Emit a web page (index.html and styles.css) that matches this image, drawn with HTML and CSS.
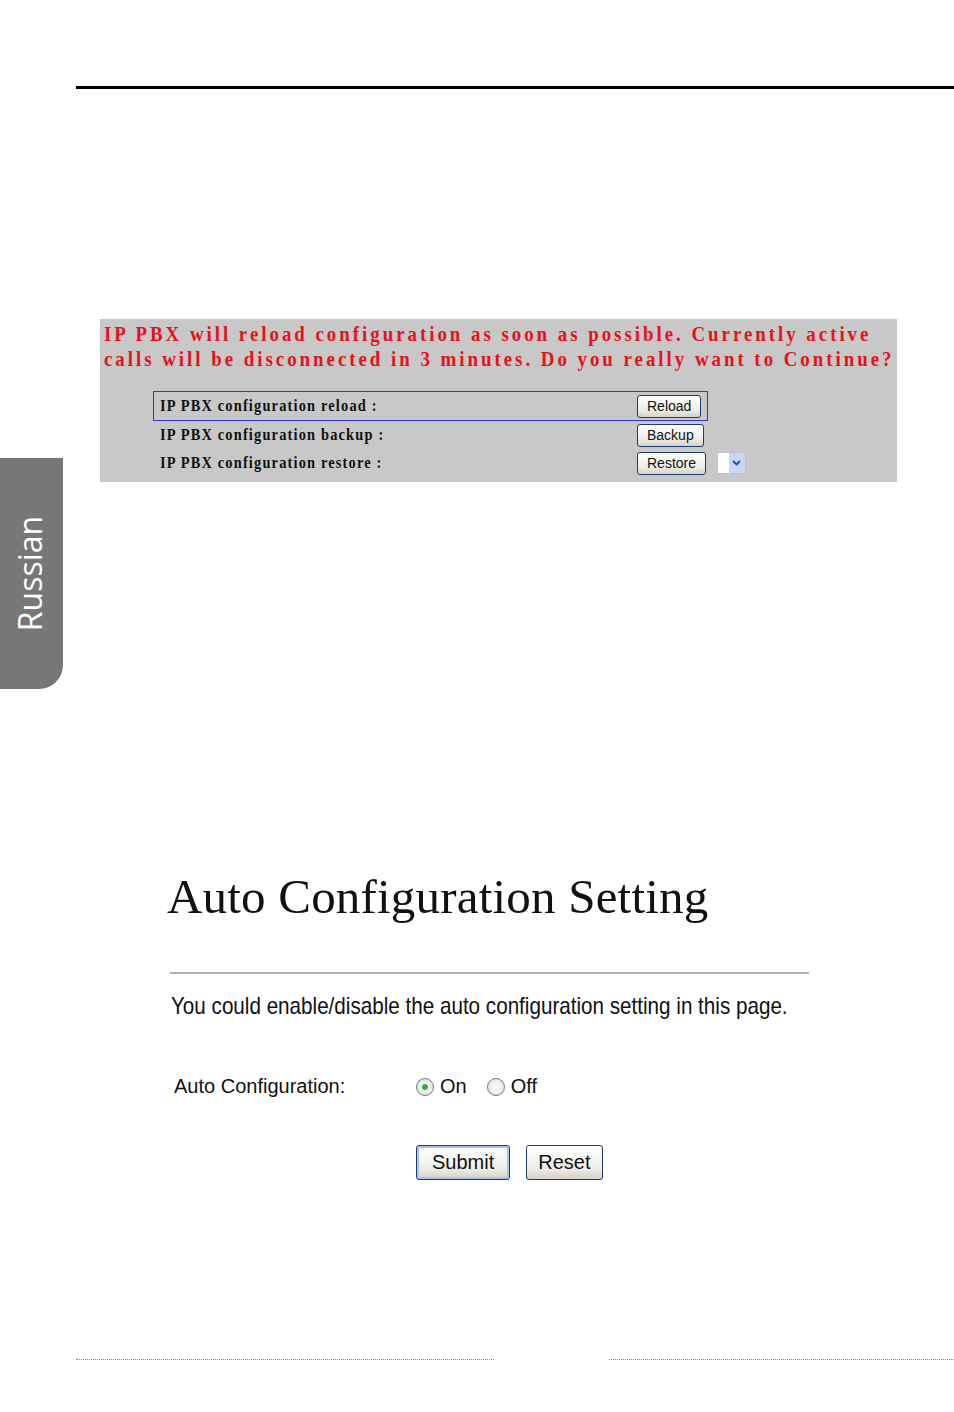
FILE: index.html
```html
<!DOCTYPE html>
<html lang="en">

<head>
    <title>Auto Configuration</title>
    <meta charset="utf-8">
    <link rel="stylesheet" href="styles.css">
</head>

<body>
    <div class="page">
        <div class="top-rule"></div>

        <!-- reload / backup / restore panel -->
        <div class="pbx-panel">
            <p class="pbx-warning">
                <span>IP PBX will reload configuration as soon as possible. Currently active</span><br>
                <span>calls will be disconnected in 3 minutes. Do you really want to Continue?</span>
            </p>
            <table class="pbx-table">
                <tr class="row-active">
                    <td class="pbx-label"><span>IP PBX configuration reload :</span></td>
                    <td class="pbx-action"><button class="pbx-btn">Reload</button></td>
                    <td></td>
                </tr>
                <tr>
                    <td class="pbx-label"><span>IP PBX configuration backup :</span></td>
                    <td class="pbx-action"><button class="pbx-btn">Backup</button></td>
                    <td></td>
                </tr>
                <tr>
                    <td class="pbx-label"><span>IP PBX configuration restore :</span></td>
                    <td class="pbx-action"><button class="pbx-btn">Restore</button></td>
                    <td class="pbx-extra">
                        <span class="mini-select">
                            <span class="mini-arrow">
                                <svg width="9" height="6" viewBox="0 0 9 6"><path d="M1 1 L4.5 4.5 L8 1" fill="none" stroke="#2b4b9b" stroke-width="1.8"/></svg>
                            </span>
                        </span>
                    </td>
                </tr>
            </table>
        </div>

        <div class="side-tab"><span>Russian</span></div>

        <!-- auto configuration form -->
        <div class="auto-config">
            <h1 class="ac-title">Auto Configuration Setting</h1>
            <div class="ac-rule"></div>
            <p class="ac-desc"><span>You could enable/disable the auto configuration setting in this page.</span></p>
            <div class="ac-row">
                <span class="ac-label">Auto Configuration:</span>
                <label class="radio"><span class="radio-dot checked"></span>On</label>
                <label class="radio"><span class="radio-dot"></span>Off</label>
            </div>
            <div class="ac-buttons">
                <button class="xp-btn default">Submit</button>
                <button class="xp-btn reset">Reset</button>
            </div>
        </div>

        <div class="footer">
            <div class="dots dots-left"></div>
            <div class="dots dots-right"></div>
        </div>
    </div>
</body>

</html>
```

FILE: styles.css
```css
body {
    margin: 0;
    padding: 0;
    background: #FFFFFF;
}

.page {
    position: relative;
    width: 954px;
    height: 1412px;
    overflow: hidden;
}

.top-rule {
    margin: 86px 0 0 76px;
    height: 3px;
    background: #000000;
}

.pbx-panel {
    margin: 230px 0 0 100px;
    width: 797px;
    height: 163px;
    box-sizing: border-box;
    background: #C8C8C8;
    padding: 3px 0 0 4px;
}

.pbx-warning {
    margin: 0;
    font-family: 'Liberation Serif', serif;
    font-weight: 700;
    font-size: 21px;
    line-height: 25px;
    letter-spacing: 3.3px;
    color: #E8101A;
    white-space: nowrap;
}

.pbx-warning span {
    display: inline-block;
    transform: scaleX(0.9);
    transform-origin: left center;
}

.pbx-table {
    margin: 19px 0 0 49px;
    border-collapse: collapse;
}

.pbx-table td {
    height: 28px;
    padding: 0;
}

.row-active td {
    border-top: 1px solid #3535D8;
    border-bottom: 1px solid #3535D8;
}

.row-active td:first-child {
    border-left: 1px solid #3535D8;
}

.row-active td:nth-child(2) {
    border-right: 1px solid #3535D8;
}

.row-active td:last-child {
    border: none;
}

.pbx-label {
    width: 477px;
    padding-left: 6px !important;
    font-family: 'Liberation Serif', serif;
    font-weight: 700;
    font-size: 16px;
    letter-spacing: 1.3px;
    color: #111111;
    white-space: nowrap;
}

.pbx-label span {
    display: inline-block;
    transform: scaleX(0.9);
    transform-origin: left center;
}

.pbx-action {
    width: 70px;
}

.pbx-btn {
    display: block;
    height: 23px;
    padding: 0 9px;
    font-family: 'Liberation Sans', sans-serif;
    font-size: 14px;
    color: #111111;
    background: linear-gradient(#FFFFFF, #ECECE6 70%, #D6D0C5);
    border: 1px solid #1C3C6E;
    border-radius: 3px;
}

.pbx-extra {
    padding-left: 9px !important;
}

.mini-select {
    display: flex;
    justify-content: flex-end;
    width: 29px;
    height: 22px;
    background: #FFFFFF;
    border: 1px solid #C4C4C4;
    box-sizing: border-box;
}

.mini-arrow {
    display: flex;
    align-items: center;
    justify-content: center;
    width: 16px;
    background: #C9D6F6;
}

.side-tab {
    position: absolute;
    left: 0;
    top: 458px;
    width: 63px;
    height: 231px;
    background: #777777;
    border-bottom-right-radius: 24px;
    display: flex;
    align-items: center;
    justify-content: center;
}

.side-tab span {
    transform: rotate(-90deg);
    font-family: 'Open Sans', sans-serif;
    font-size: 32px;
    color: #FFFFFF;
    margin-left: -4px;
}

.auto-config {
    margin: 0 0 0 167px;
    padding-top: 385px;
    width: 642px;
}

.ac-title {
    margin: 0;
    font-family: 'Liberation Serif', serif;
    font-weight: 400;
    font-size: 49px;
    line-height: 60px;
    letter-spacing: 0.2px;
    color: #111111;
}

.ac-rule {
    margin: 45px 0 0 3px;
    height: 2px;
    background: #B5B2A8;
}

.ac-desc {
    margin: 17px 0 0 4px;
    font-family: 'Liberation Sans', sans-serif;
    font-size: 24px;
    line-height: 30px;
    color: #111111;
    white-space: nowrap;
}

.ac-desc span {
    display: inline-block;
    transform: scaleX(0.86);
    transform-origin: left center;
}

.ac-row {
    display: flex;
    align-items: center;
    margin: 54px 0 0 7px;
    font-family: 'Liberation Sans', sans-serif;
    font-size: 20px;
    color: #111111;
}

.ac-label {
    width: 242px;
}

.radio {
    display: flex;
    align-items: center;
    gap: 6px;
    margin-right: 20px;
}

.radio-dot {
    width: 16px;
    height: 16px;
    border: 1px solid #6A7A8A;
    border-radius: 50%;
    background: radial-gradient(#FFFFFF, #DDDDDD);
    display: flex;
    align-items: center;
    justify-content: center;
}

.radio-dot.checked::after {
    content: "";
    width: 6px;
    height: 6px;
    border-radius: 50%;
    background: #3EAA3E;
}

.ac-buttons {
    display: flex;
    gap: 16px;
    margin: 47px 0 0 249px;
}

.xp-btn {
    height: 35px;
    padding: 0 15px;
    font-family: 'Liberation Sans', sans-serif;
    font-size: 20px;
    color: #111111;
    background: linear-gradient(#FFFFFF, #ECECE6 70%, #D6D0C5);
    border: 1px solid #1C3C6E;
    border-radius: 3px;
}

.xp-btn.reset {
    padding: 0 11px;
}

.xp-btn.default {
    box-shadow: inset 0 0 0 2px #A9C3F0;
}

.footer {
    display: flex;
    margin-top: 179px;
}

.dots {
    height: 1px;
    border-top: 1px dotted #888888;
}

.dots-left {
    margin-left: 76px;
    width: 418px;
}

.dots-right {
    margin-left: 115px;
    width: 345px;
}
```
